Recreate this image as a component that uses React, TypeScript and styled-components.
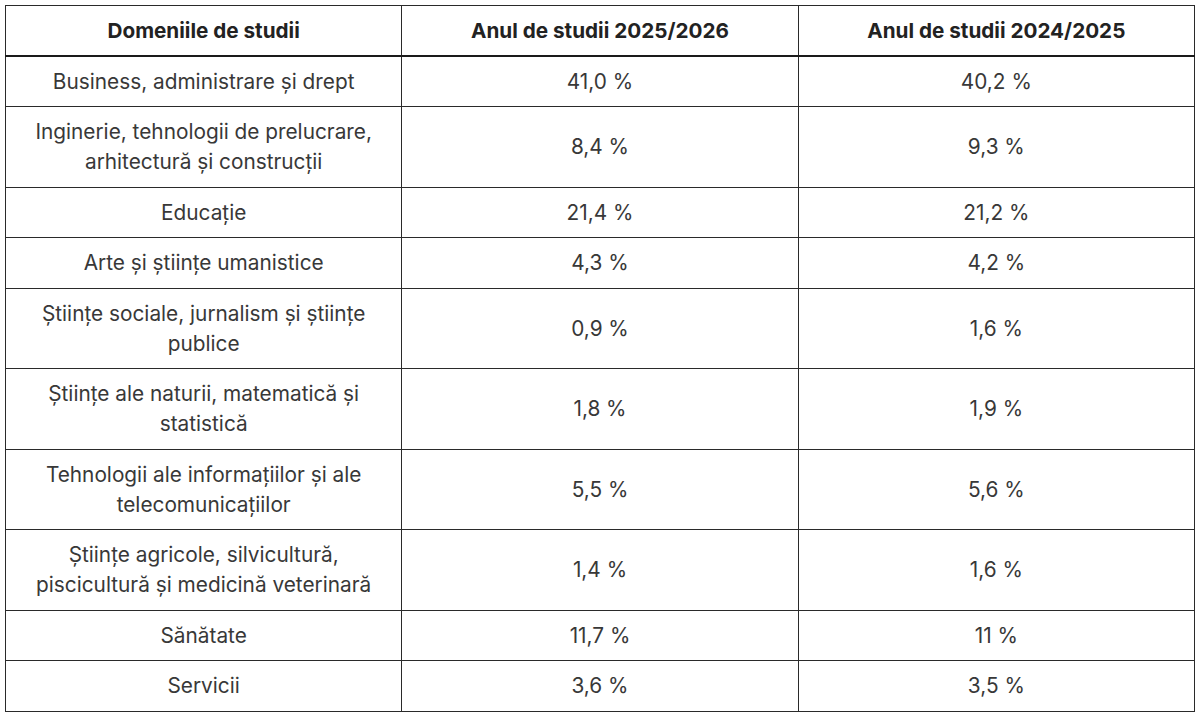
import React from "react";
import styled, { createGlobalStyle } from "styled-components";

const Global = createGlobalStyle`
  html, body { margin: 0; padding: 0; background: #ffffff; }
  body { font-family: Inter, "Noto Sans", "Liberation Sans", sans-serif; }
`;

const Page = styled.div`
  padding: 5px;
  background: #ffffff;
`;

const Table = styled.table`
  width: 100%;
  border-collapse: collapse;
  table-layout: fixed;
  border: 1px solid #2a2a2a;
`;

const HeadCell = styled.th`
  border: 1px solid #2a2a2a;
  border-bottom: 2px solid #1a1a1a;
  padding: 10px 16px 9px;
  line-height: 30px;
  font-size: 20.7px;
  font-weight: 700;
  color: #222222;
  text-align: center;
`;

const Cell = styled.td`
  border: 1px solid #2a2a2a;
  padding: 9.95px 16px 9.55px;
  line-height: 30px;
  font-size: 20.8px;
  font-weight: 400;
  color: #383838;
  text-align: center;
  vertical-align: middle;
`;

const rows: [string, string, string][] = [
  ["Business, administrare și drept", "41,0 %", "40,2 %"],
  ["Inginerie, tehnologii de prelucrare, arhitectură și construcții", "8,4 %", "9,3 %"],
  ["Educație", "21,4 %", "21,2 %"],
  ["Arte și științe umanistice", "4,3 %", "4,2 %"],
  ["Științe sociale, jurnalism și științe publice", "0,9 %", "1,6 %"],
  ["Științe ale naturii, matematică și statistică", "1,8 %", "1,9 %"],
  ["Tehnologii ale informațiilor și ale telecomunicațiilor", "5,5 %", "5,6 %"],
  ["Științe agricole, silvicultură, piscicultură și medicină veterinară", "1,4 %", "1,6 %"],
  ["Sănătate", "11,7 %", "11 %"],
  ["Servicii", "3,6 %", "3,5 %"],
];

export default function App() {
  return (
    <Page>
      <Global />
      <Table>
        <thead>
          <tr>
            <HeadCell>Domeniile de studii</HeadCell>
            <HeadCell>Anul de studii 2025/2026</HeadCell>
            <HeadCell>Anul de studii 2024/2025</HeadCell>
          </tr>
        </thead>
        <tbody>
          {rows.map(([a, b, c]) => (
            <tr key={a}>
              <Cell>{a}</Cell>
              <Cell>{b}</Cell>
              <Cell>{c}</Cell>
            </tr>
          ))}
        </tbody>
      </Table>
    </Page>
  );
}
